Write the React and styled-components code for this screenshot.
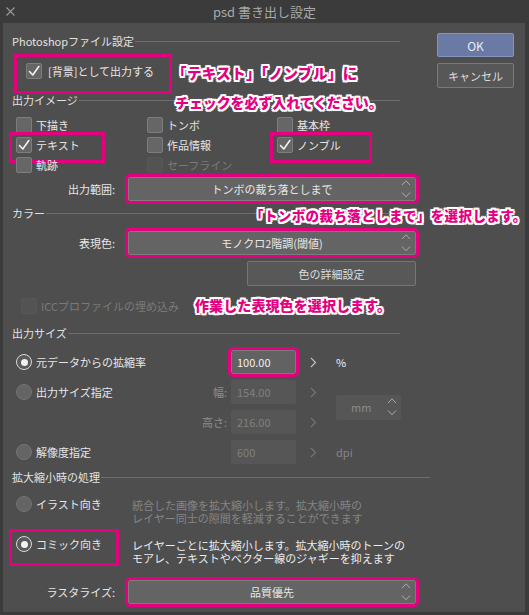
import React from 'react';
import styled, { createGlobalStyle, css } from 'styled-components';

const PINK = '#e5007f';

const GlobalStyle = createGlobalStyle`
  html, body {
    margin: 0;
    padding: 0;
    background: #3b3b3b;
  }
  * { box-sizing: border-box; }
`;

const markable = css`
  ${p => p.$mark && css`
    &::after {
      content: '';
      position: absolute;
      left: ${p.$mark[0]}px;
      top: ${p.$mark[1]}px;
      width: ${p.$mark[2]}px;
      height: ${p.$mark[3]}px;
      border: 3px solid ${PINK};
      pointer-events: none;
    }
  `}
`;

const Frame = styled.div`
  position: relative;
  width: 529px;
  height: 615px;
  background: #3b3b3b;
  display: flex;
  flex-direction: column;
  overflow: hidden;
  font-family: 'Noto Sans CJK JP', 'Noto Sans', sans-serif;
  font-size: 11px;
  color: #e6e6e6;
`;

const TitleBar = styled.div`
  height: 23px;
  display: grid;
  grid-template-columns: 30px 1fr 30px;
  align-items: center;
  color: #a9a9a9;
  font-size: 13px;
`;

const Close = styled.div`
  display: flex;
  padding-left: 6px;
`;

const Title = styled.div`
  text-align: center;
`;

const Panel = styled.div`
  flex: 1;
  margin: 0 4px 3px 3px;
  background: #4e4e4e;
  display: flex;
  padding: 10px 0 0 9px;
`;

const Main = styled.div`
  width: 418px;
  display: flex;
  flex-direction: column;
`;

const Side = styled.div`
  margin-left: 7px;
  display: flex;
  flex-direction: column;
  gap: 6px;
`;

const DialogButton = styled.div`
  width: 77px;
  height: ${p => (p.$primary ? 24 : 25)}px;
  display: flex;
  align-items: center;
  justify-content: center;
  border-radius: 2px;
  border: 1px solid ${p => (p.$primary ? '#8595bd' : '#7a7a7a')};
  background: ${p => (p.$primary ? '#6a7aa4' : '#575757')};
  color: ${p => (p.$primary ? '#e8ecf4' : '#dedede')};
  font-size: ${p => (p.$primary ? 12 : 11)}px;
`;

const Header = styled.div`
  display: flex;
  align-items: center;
  gap: 1px;
  height: 16px;
  width: ${p => (p.$wide ? 418 : 388)}px;
  margin-top: ${p => p.$mt || 0}px;
  color: #e2e2e2;
  white-space: nowrap;
  &::after {
    content: '';
    flex: 1;
    height: 1px;
    background: #6e6e6e;
  }
`;

const SingleRow = styled.div`
  display: flex;
  align-items: center;
  height: ${p => p.$h}px;
  margin-top: ${p => p.$mt}px;
  padding-left: ${p => p.$indent}px;
`;

const CheckGrid = styled.div`
  display: grid;
  grid-template-columns: 131px 130px 1fr;
  grid-auto-rows: 20px;
  padding-left: 4px;
  margin-top: 7px;
`;

const CheckItem = styled.div`
  position: relative;
  display: flex;
  align-items: center;
  gap: ${p => p.$gap || 4}px;
  color: ${p => (p.$disabled ? '#7a7a7a' : '#e6e6e6')};
  white-space: nowrap;
  ${markable}
`;

const Box = styled.div`
  width: 16px;
  height: 16px;
  border-radius: 2px;
  border: 1px solid ${p => (p.$disabled ? '#575757' : '#7d7d7d')};
  background: ${p => (p.$disabled ? '#535353' : '#666666')};
  display: grid;
  place-items: center;
`;

const FormRow = styled.div`
  display: grid;
  grid-template-columns: 103px 288px;
  column-gap: 13px;
  align-items: center;
  margin-top: ${p => p.$mt}px;
`;

const FormLabel = styled.div`
  text-align: right;
  color: #e6e6e6;
`;

const Select = styled.div`
  height: 24px;
  display: grid;
  grid-template-columns: 24px 1fr 24px;
  align-items: center;
  border-radius: 2px;
  border: 1px solid #7c7c7c;
  background: #646464;
  color: #e8e8e8;
  outline: 3px solid ${PINK};
`;

const SelectText = styled.div`
  text-align: center;
`;

const Spin = styled.div`
  display: flex;
  justify-content: flex-end;
  padding-right: 4px;
`;

const WideButton = styled.div`
  margin: 6px 0 0 235px;
  width: 169px;
  height: 25px;
  display: flex;
  align-items: center;
  justify-content: center;
  border-radius: 2px;
  border: 1px solid #767676;
  background: #585858;
  color: #dcdcdc;
`;

const SizeGrid = styled.div`
  display: grid;
  grid-template-columns: 184px 31px 65px 34px auto;
  grid-template-rows: repeat(4, 24px);
  row-gap: 6px;
  align-items: center;
  padding-left: 4px;
  margin-top: 9px;
`;

const RadioItem = styled.div`
  position: relative;
  display: flex;
  align-items: center;
  gap: 4px;
  height: 14px;
  grid-column: 1;
  white-space: nowrap;
  ${markable}
`;

const Radio = styled.div`
  width: 16px;
  height: 16px;
  border-radius: 50%;
  flex: none;
  display: grid;
  place-items: center;
  ${p =>
    p.$on
      ? css`
          border: 1.5px solid #d9d9d9;
          background: #5a5a5a;
          &::before {
            content: '';
            width: 7px;
            height: 7px;
            border-radius: 50%;
            background: #f2f2f2;
          }
        `
      : css`
          border: 1px solid #747474;
          background: #646464;
        `}
`;

const SmallLabel = styled.div`
  grid-column: 2;
  text-align: right;
  padding-right: 4px;
  color: #8c8c8c;
`;

const NumInput = styled.div`
  grid-column: 3;
  height: 24px;
  display: flex;
  align-items: center;
  padding-left: 5px;
  border-radius: 2px;
  border: 1px solid ${p => (p.$active ? '#7a7a7a' : '#565656')};
  background: ${p => (p.$active ? '#626262' : '#565656')};
  color: ${p => (p.$active ? '#f0f0f0' : '#808080')};
  ${p => p.$active && css`outline: 3px solid ${PINK};`}
`;

const Arrow = styled.div`
  grid-column: 4;
  display: flex;
  justify-content: center;
`;

const Unit = styled.div`
  grid-column: 5;
  padding-left: 6px;
  color: ${p => (p.$active ? '#f0f0f0' : '#858585')};
`;

const UnitSelect = styled.div`
  grid-column: 5;
  grid-row: 2 / 4;
  margin-left: 6px;
  width: 65px;
  height: 25px;
  display: flex;
  align-items: center;
  justify-content: space-between;
  padding: 0 4px 0 15px;
  border-radius: 2px;
  background: #565656;
  color: #8a8a8a;
`;

const ScaleRow = styled.div`
  display: grid;
  grid-template-columns: 116px 1fr;
  align-items: start;
  padding-left: 4px;
  margin-top: 12px;
`;

const Desc = styled.div`
  margin-top: 2px;
  white-space: nowrap;
  color: ${p => (p.$dim ? '#858585' : '#ececec')};
`;

const DescLine = styled.div`
  height: 13px;
  line-height: 13px;
`;

const Note = styled.div`
  position: absolute;
  left: ${p => p.$x}px;
  top: ${p => p.$y}px;
  font-size: ${p => p.$size}px;
  line-height: 18px;
  font-weight: 900;
  white-space: nowrap;
  letter-spacing: ${p => p.$ls || 0}px;
  color: ${PINK};
  text-shadow: 2px 0 #fff, -2px 0 #fff, 0 2px #fff, 0 -2px #fff,
    1.6px 1.6px #fff, -1.6px 1.6px #fff, 1.6px -1.6px #fff, -1.6px -1.6px #fff,
    0 0 3px rgba(255, 255, 255, 0.9);
`;

const CheckMark = () => (
  <svg width="14" height="14" viewBox="0 0 14 14">
    <path d="M2.5 7.5 L5.8 11 L11.8 2.5" fill="none" stroke="#f2f2f2" strokeWidth="1.6" strokeLinejoin="round" strokeLinecap="round" />
  </svg>
);

const UpDown = () => (
  <svg width="10" height="20" viewBox="0 0 10 20">
    <path d="M1 6 L5 1.8 L9 6 M1 13.5 L5 17.8 L9 13.5" fill="none" stroke="#ababab" strokeWidth="1" />
  </svg>
);

const Chevron = ({ light }) => (
  <svg width="7" height="11" viewBox="0 0 7 11">
    <path d="M1 1 L5.5 5.5 L1 10" fill="none" stroke={light ? '#c4c4c4' : '#777'} strokeWidth="1.1" />
  </svg>
);

const Check = ({ label, checked, disabled, mark, gap }) => (
  <CheckItem $disabled={disabled} $mark={mark} $gap={gap}>
    <Box $disabled={disabled}>{checked && <CheckMark />}</Box>
    {label}
  </CheckItem>
);

const Dropdown = ({ value }) => (
  <Select>
    <span />
    <SelectText>{value}</SelectText>
    <Spin>
      <UpDown />
    </Spin>
  </Select>
);

export default function App() {
  return (
    <Frame>
      <GlobalStyle />
      <TitleBar>
        <Close>
          <svg width="9" height="9" viewBox="0 0 9 9">
            <path d="M0.5 0.5 L8.5 8.5 M8.5 0.5 L0.5 8.5" stroke="#9a9a9a" strokeWidth="1.1" />
          </svg>
        </Close>
        <Title>psd 書き出し設定</Title>
        <span />
      </TitleBar>

      <Panel>
        <Main>
          <Header>Photoshopファイル設定</Header>
          <SingleRow $h={18} $mt={13} $indent={14}>
            <Check label="[背景]として出力する" checked gap={6} mark={[-12, -9, 152, 34]} />
          </SingleRow>

          <Header $mt={12}>出力イメージ</Header>
          <CheckGrid>
            <Check label="下描き" />
            <Check label="トンボ" />
            <Check label="基本枠" />
            <Check label="テキスト" checked mark={[-7, -3, 90, 25]} />
            <Check label="作品情報" />
            <Check label="ノンブル" checked mark={[-7, -3, 96, 25]} />
            <Check label="軌跡" />
            <Check label="セーフライン" disabled />
          </CheckGrid>
          <FormRow $mt={2}>
            <FormLabel>出力範囲:</FormLabel>
            <Dropdown value="トンボの裁ち落としまで" />
          </FormRow>

          <Header $mt={4}>カラー</Header>
          <FormRow $mt={10}>
            <FormLabel>表現色:</FormLabel>
            <Dropdown value="モノクロ2階調(閾値)" />
          </FormRow>
          <WideButton>色の詳細設定</WideButton>
          <SingleRow $h={16} $mt={12} $indent={9}>
            <Check label="ICCプロファイルの埋め込み" disabled />
          </SingleRow>

          <Header $mt={11}>出力サイズ</Header>
          <SizeGrid>
            <RadioItem>
              <Radio $on />
              元データからの拡縮率
            </RadioItem>
            <NumInput $active>100.00</NumInput>
            <Arrow><Chevron light /></Arrow>
            <Unit $active>%</Unit>

            <RadioItem>
              <Radio />
              出力サイズ指定
            </RadioItem>
            <SmallLabel>幅:</SmallLabel>
            <NumInput>154.00</NumInput>
            <Arrow><Chevron /></Arrow>
            <UnitSelect>
              mm
              <UpDown />
            </UnitSelect>

            <SmallLabel>高さ:</SmallLabel>
            <NumInput>216.00</NumInput>
            <Arrow><Chevron /></Arrow>

            <RadioItem>
              <Radio />
              解像度指定
            </RadioItem>
            <NumInput>600</NumInput>
            <Arrow><Chevron /></Arrow>
            <Unit>dpi</Unit>
          </SizeGrid>

          <Header $mt={5} $wide>拡大縮小時の処理</Header>
          <ScaleRow>
            <RadioItem>
              <Radio />
              イラスト向き
            </RadioItem>
            <Desc $dim>
              <DescLine>統合した画像を拡大縮小します。拡大縮小時の</DescLine>
              <DescLine>レイヤー同士の隙間を軽減することができます</DescLine>
            </Desc>
          </ScaleRow>
          <ScaleRow>
            <RadioItem $mark={[-7, -8, 104, 31]}>
              <Radio $on />
              コミック向き
            </RadioItem>
            <Desc>
              <DescLine>レイヤーごとに拡大縮小します。拡大縮小時のトーンの</DescLine>
              <DescLine>モアレ、テキストやベクター線のジャギーを抑えます</DescLine>
            </Desc>
          </ScaleRow>
          <FormRow $mt={15}>
            <FormLabel>ラスタライズ:</FormLabel>
            <Dropdown value="品質優先" />
          </FormRow>
        </Main>

        <Side>
          <DialogButton $primary>OK</DialogButton>
          <DialogButton>キャンセル</DialogButton>
        </Side>
      </Panel>

      <Note $x={172} $y={64} $size={14.5} $ls={0.4}>「テキスト」「ノンブル」に</Note>
      <Note $x={175} $y={93} $size={14} $ls={-0.1}>チェックを必ず入れてください。</Note>
      <Note $x={250} $y={206} $size={13.5} $ls={0.4}>「トンボの裁ち落としまで」を選択します。</Note>
      <Note $x={195} $y={296} $size={14} $ls={0.1}>作業した表現色を選択します。</Note>
    </Frame>
  );
}
